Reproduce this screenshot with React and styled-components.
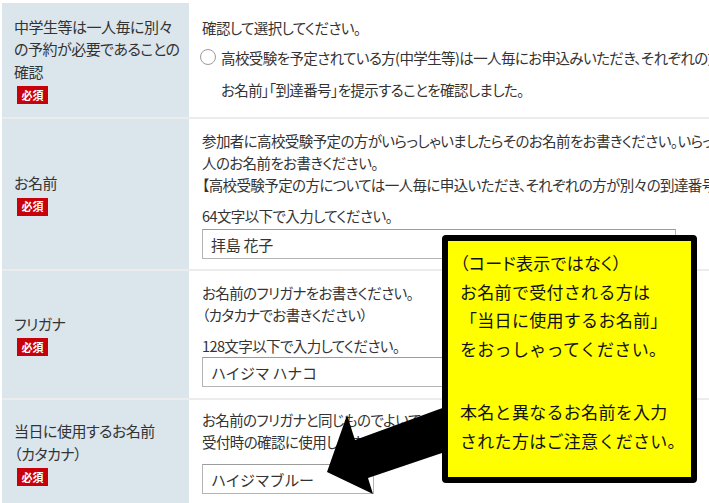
import React from "react";
import styled, { createGlobalStyle } from "styled-components";

const Global = createGlobalStyle`
  html, body { margin: 0; padding: 0; background: #fff; }
  body {
    font-family: "Noto Sans CJK JP", "Noto Sans", sans-serif;
    color: #333;
  }
`;

const Page = styled.div`
  position: relative;
  width: 709px;
  height: 503px;
  overflow: hidden;
  padding: 3px 0 0 2px;
  box-sizing: border-box;
  background: #fff;
`;

const Table = styled.div`
  display: grid;
  grid-template-columns: 187px 780px;
  row-gap: 2px;
  background: #ececec;
  width: 967px;
`;

const HeadCell = styled.div`
  background: #dbe5ec;
  display: flex;
  flex-direction: column;
  justify-content: center;
  align-items: flex-start;
  padding: 0 4px 0 12px;
  font-size: 15px;
  line-height: 22.5px;
  font-feature-settings: "palt";
  letter-spacing: -0.5px;
  white-space: nowrap;
  color: #333;
`;

const Badge = styled.span`
  display: inline-flex;
  align-items: center;
  justify-content: center;
  width: 31px;
  height: 18px;
  margin: 3px 0 0 3px;
  background: #c8000a;
  color: #fff;
  font-size: 11px;
  font-weight: 700;
  line-height: 1;
  letter-spacing: 0;
`;

const BodyCell = styled.div`
  background: #fff;
  padding: ${(p) => p.$top}px 0 ${(p) => p.$bottom}px 13px;
  font-size: 14.5px;
  line-height: 22px;
  font-feature-settings: "palt";
  letter-spacing: -0.6px;
  white-space: nowrap;
  color: #333;
`;

const Line = styled.div`
  margin-top: ${(p) => p.$mt || 0}px;
`;

const Option = styled.label`
  display: flex;
  align-items: flex-start;
  gap: 5px;
  margin: 3px 0 0 -2px;
  line-height: 32px;
`;

const Radio = styled.span`
  flex: none;
  width: 16px;
  height: 16px;
  margin-top: 7px;
  border: 1px solid #9a9a9a;
  border-radius: 50%;
  box-sizing: border-box;
  background: #fff;
`;

const TextInput = styled.input`
  display: block;
  width: ${(p) => p.$w}px;
  height: 30px;
  margin-top: ${(p) => p.$mt || 0}px;
  box-sizing: border-box;
  border: 1px solid #b4b4b4;
  border-top-color: #9c9c9c;
  padding: 0 8px;
  font-family: "Noto Sans CJK JP", sans-serif;
  font-size: 15px;
  letter-spacing: -0.3px;
  color: #333;
  background: #fff;
  outline: none;
`;

const Arrow = styled.svg`
  position: absolute;
  left: 0;
  top: 0;
  pointer-events: none;
`;

const Callout = styled.div`
  position: absolute;
  left: 442px;
  top: 235px;
  width: 255px;
  height: 248px;
  box-sizing: border-box;
  border: 6px solid #000;
  border-radius: 4px;
  background: #ffff00;
  padding: 8px 0 0 12px;
  font-size: 17px;
  line-height: 28.7px;
  color: #111;
  letter-spacing: 0.3px;
  white-space: nowrap;
`;

const Para = styled.div`
  margin-top: ${(p) => p.$mt || 0}px;
  font-feature-settings: ${(p) => (p.$tight ? '"palt"' : "normal")};
`;

export default function App() {
  return (
    <>
      <Global />
      <Page>
        <Table>
          <HeadCell>
            <div>中学生等は一人毎に別々</div>
            <div>の予約が必要であることの</div>
            <div>確認</div>
            <Badge>必須</Badge>
          </HeadCell>
          <BodyCell $top={14} $bottom={11}>
            <Line>確認して選択してください。</Line>
            <Option>
              <Radio />
              <div>
                <div>高校受験を予定されている方(中学生等)は一人毎にお申込みいただき、それぞれの方が別々の「</div>
                <div>お名前」「到達番号」を提示することを確認しました。</div>
              </div>
            </Option>
          </BodyCell>

          <HeadCell>
            <div>お名前</div>
            <Badge>必須</Badge>
          </HeadCell>
          <BodyCell $top={11} $bottom={10}>
            <Line>参加者に高校受験予定の方がいらっしゃいましたらそのお名前をお書きください。いらっしゃらない場合は代表者1</Line>
            <Line>人のお名前をお書きください。</Line>
            <Line>【高校受験予定の方については一人毎に申込いただき、それぞれの方が別々の到達番号を提示してください】</Line>
            <Line $mt={9}>64文字以下で入力してください。</Line>
            <TextInput $w={474} $mt={2} readOnly defaultValue="拝島 花子" />
          </BodyCell>

          <HeadCell>
            <div>フリガナ</div>
            <Badge>必須</Badge>
          </HeadCell>
          <BodyCell $top={11} $bottom={11}>
            <Line>お名前のフリガナをお書きください。</Line>
            <Line>（カタカナでお書きください）</Line>
            <Line $mt={9}>128文字以下で入力してください。</Line>
            <TextInput $w={474} readOnly defaultValue="ハイジマ ハナコ" />
          </BodyCell>

          <HeadCell>
            <div>当日に使用するお名前</div>
            <div>（カタカナ）</div>
            <Badge>必須</Badge>
          </HeadCell>
          <BodyCell $top={9} $bottom={12}>
            <Line>お名前のフリガナと同じものでよいです。</Line>
            <Line>受付時の確認に使用します。</Line>
            <TextInput $w={172} $mt={11} readOnly defaultValue="ハイジマブルー" />
          </BodyCell>
        </Table>

        <Arrow width="709" height="503" viewBox="0 0 709 503">
          <polygon
            points="327,472 347,415 355,440 448,406 448,451 368,478 373,494"
            fill="#000"
          />
        </Arrow>

        <Callout>
          <Para $tight>（コード表示ではなく）</Para>
          <Para>お名前で受付される方は</Para>
          <Para>「当日に使用するお名前」</Para>
          <Para>をおっしゃってください。</Para>
          <Para $mt={34}>本名と異なるお名前を入力</Para>
          <Para>された方はご注意ください。</Para>
        </Callout>
      </Page>
    </>
  );
}
